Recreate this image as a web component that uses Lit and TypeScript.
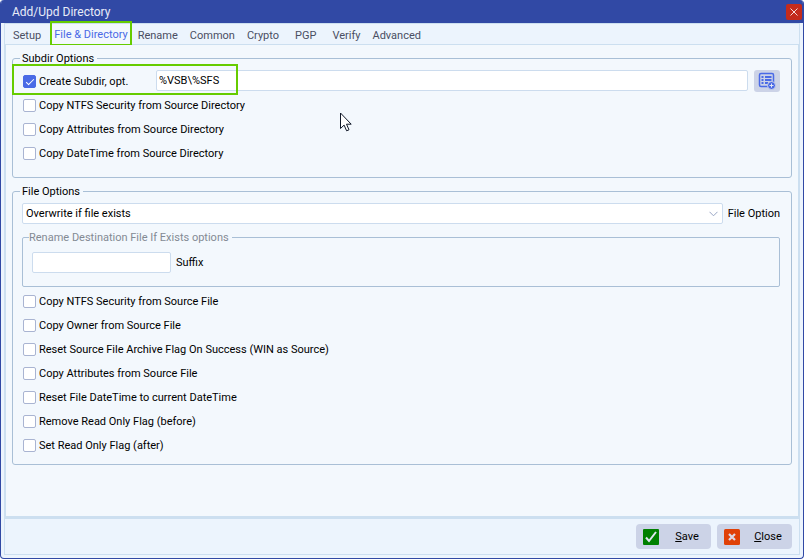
import { LitElement, html, css } from "lit";
import { customElement, property, state } from "lit/decorators.js";

const TABS = ["Setup", "File & Directory", "Rename", "Common", "Crypto", "PGP", "Verify", "Advanced"];

@customElement("check-row")
class CheckRow extends LitElement {
  @property() label = "";
  @property({ type: Boolean }) checked = false;

  static styles = css`
    :host {
      display: flex;
      align-items: center;
      height: 23px;
      flex: none;
    }
    label {
      display: flex;
      align-items: center;
      gap: 3px;
      padding-left: 1px;
      white-space: nowrap;
    }
    input {
      appearance: none;
      box-sizing: border-box;
      width: 13px;
      height: 13px;
      margin: 0;
      border: 1px solid #a9b4d2;
      border-radius: 2px;
      background: #fff;
      display: grid;
      place-items: center;
    }
    input:checked {
      border-color: #4a6ae6;
      background: #4a6ae6;
    }
    input:checked::after {
      content: "";
      width: 7px;
      height: 3px;
      border: solid #fff;
      border-width: 0 0 1px 1px;
      transform: translateY(-1px) rotate(-45deg);
    }
  `;

  render() {
    return html`<label><input type="checkbox" ?checked=${this.checked} />${this.label}</label>`;
  }
}

@customElement("app-root")
class AppRoot extends LitElement {
  @state() active = 1;

  static styles = css`
    :host {
      display: block;
      font: 11px/15px Roboto, "Noto Sans", sans-serif;
      color: #000;
    }
    * {
      box-sizing: border-box;
    }
    button,
    input,
    select {
      font: inherit;
      color: inherit;
      margin: 0;
    }
    .window {
      display: flex;
      flex-direction: column;
      min-height: 100vh;
      border: 1px solid #3149a5;
      border-top: 0;
      border-radius: 4px;
      background: #ecf4fd;
      overflow: hidden;
    }
    .title {
      display: flex;
      align-items: center;
      justify-content: space-between;
      height: 23px;
      padding: 0 1px 0 11px;
      background: #3149a5;
      color: #e8ecf8;
    }
    h1 {
      margin: 0;
      padding-top: 1px;
      font-size: 12px;
      font-weight: 400;
    }
    .x {
      width: 16px;
      height: 16px;
      padding: 0;
      border: 0;
      border-radius: 2px;
      background: #c42b1c;
      display: grid;
      place-items: center;
    }
    .body {
      flex: 1;
      display: flex;
      flex-direction: column;
      margin: 0 3px 3px;
      border: 1px solid #ccdff0;
    }
    .tabs {
      display: flex;
      height: 21px;
      padding-left: 2px;
      border-bottom: 1px solid #ccdff0;
    }
    .tab {
      position: relative;
      height: 21px;
      padding: 1px 6px 0;
      border: 0;
      background: none;
      color: #4a4e62;
      white-space: nowrap;
    }
    .tab.short {
      padding: 1px 10px 0;
    }
    .tab.active {
      margin-left: 3px;
      background: #f3f8fd;
      border: solid #ccdff0;
      border-width: 0 1px;
      padding: 0 3px 1px;
      color: #4a6ae6;
    }
    .mark {
      position: absolute;
      border: 2px solid #66cc00;
      pointer-events: none;
    }
    .tab .mark {
      inset: -3px -1px -1px;
    }
    .page {
      position: relative;
      flex: 1;
      display: flex;
      flex-direction: column;
      gap: 6px;
      padding: 6px;
      border: solid #ccdff0;
      border-width: 0 1px;
      background: #f3f8fd;
    }
    .pointer {
      position: absolute;
      left: 333px;
      top: 67px;
      pointer-events: none;
    }
    fieldset {
      min-width: 0;
      margin: 0;
      padding: 4px 11px 12px 9px;
      border: 1px solid #a9bfd6;
      border-radius: 3px;
    }
    legend {
      height: 15px;
      margin-left: -2px;
      padding: 0 3px 0 2px;
    }
    .rows {
      display: flex;
      flex-direction: column;
      gap: 1px;
    }
    .line {
      position: relative;
      display: flex;
      align-items: flex-start;
    }
    .line check-row {
      width: 134px;
    }
    .line .mark {
      left: -10px;
      top: -6px;
      width: 226px;
      height: 31px;
    }
    input,
    select {
      height: 21px;
      border: 1px solid #ccdcee;
      border-radius: 2px;
      background: #fff;
      padding: 0 3px;
    }
    .subdir {
      flex: 1;
      min-width: 0;
      margin-right: 6px;
      padding: 0 2px;
    }
    .pick {
      width: 26px;
      height: 22px;
      padding: 0;
      border: 0;
      border-radius: 3px;
      background: #ccd3e7;
      display: grid;
      place-items: center;
    }
    .files {
      padding-bottom: 7px;
    }
    .choice {
      display: flex;
      align-items: center;
      gap: 5px;
    }
    .combo {
      flex: 1;
      display: grid;
      align-items: center;
    }
    .combo > * {
      grid-area: 1 / 1;
    }
    select {
      appearance: none;
      width: 100%;
    }
    .combo svg {
      justify-self: end;
      margin-right: 5px;
      pointer-events: none;
    }
    .rename {
      margin: 6px 0 3px;
      padding: 7px 9px 13px;
      border-radius: 2px;
    }
    .rename legend {
      color: #838a94;
      margin-left: -3px;
      padding-left: 0;
    }
    .suffix {
      display: flex;
      align-items: center;
      gap: 5px;
    }
    .suffix input {
      width: 139px;
    }
    .foot {
      display: flex;
      justify-content: flex-end;
      gap: 6px;
      padding: 5px 7px 5px;
      border-top: 3px solid #ccdff0;
    }
    .act {
      display: grid;
      grid-template-columns: 16px 1fr;
      gap: 11px;
      align-items: center;
      width: 75px;
      height: 25px;
      padding: 0 7px;
      border: 0;
      border-radius: 4px;
      background: #ccd3e7;
    }
    svg {
      display: block;
    }
  `;

  render() {
    return html`
      <main class="window">
        <header class="title">
          <h1>Add/Upd Directory</h1>
          <button class="x" aria-label="Close window">
            <svg width="8" height="8" viewBox="0 0 8 8"><path d="M.5.5l7 7M7.5.5l-7 7" stroke="#f3dcda" fill="none" /></svg>
          </button>
        </header>
        <div class="body">
          <nav class="tabs" role="tablist">
            ${TABS.map(
              (t, i) => html`<button
                class="tab ${t === "PGP" ? "short" : ""} ${i === this.active ? "active" : ""}"
                role="tab"
                aria-selected=${i === this.active}
                @click=${() => (this.active = i)}
              >${t}${i === 1 ? html`<span class="mark"></span>` : ""}</button>`
            )}
          </nav>
          <section class="page">
            <fieldset>
              <legend>Subdir Options</legend>
              <div class="rows">
                <div class="line">
                  <check-row label="Create Subdir, opt." checked></check-row>
                  <input class="subdir" aria-label="Subdirectory" value="%VSB\\%SFS" />
                  <button class="pick" aria-label="Insert variable">
                    <svg width="18" height="18" viewBox="0 0 18 18" fill="none" stroke="#4a6ae6">
                      <rect x="1.5" y="1.5" width="14" height="13" rx="1.5" stroke-width="1.5" />
                      <path d="M3.5 5h2M7 5h6.5M3.5 8h2M7 8h6.5M3.5 11h2M7 11h3" stroke-width="2" />
                      <circle cx="13.5" cy="13.5" r="4" fill="#4a6ae6" stroke="#ccd3e7" />
                      <path d="M11.5 13.5h4M13.5 11.5v4" stroke="#e4e8f4" />
                    </svg>
                  </button>
                  <span class="mark"></span>
                </div>
                <check-row label="Copy NTFS Security from Source Directory"></check-row>
                <check-row label="Copy Attributes from Source Directory"></check-row>
                <check-row label="Copy DateTime from Source Directory"></check-row>
              </div>
            </fieldset>
            <fieldset class="files">
              <legend>File Options</legend>
              <div class="choice">
                <div class="combo">
                  <select id="mode"><option>Overwrite if file exists</option></select>
                  <svg width="9" height="6" viewBox="0 0 9 6"><path d="M.5.8l4 4 4-4" stroke="#98a5c4" fill="none" /></svg>
                </div>
                <label for="mode">File Option</label>
              </div>
              <fieldset class="rename">
                <legend>Rename Destination File If Exists options</legend>
                <div class="suffix">
                  <input id="suffix" />
                  <label for="suffix">Suffix</label>
                </div>
              </fieldset>
              <div class="rows">
                <check-row label="Copy NTFS Security from Source File"></check-row>
                <check-row label="Copy Owner from Source File"></check-row>
                <check-row label="Reset Source File Archive Flag On Success (WIN as Source)"></check-row>
                <check-row label="Copy Attributes from Source File"></check-row>
                <check-row label="Reset File DateTime to current DateTime"></check-row>
                <check-row label="Remove Read Only Flag (before)"></check-row>
                <check-row label="Set Read Only Flag (after)"></check-row>
              </div>
            </fieldset>
            <svg class="pointer" width="14" height="20" viewBox="0 0 14 20">
              <path d="M1.5 1v15.5l3.6-3.4 2.5 5.7 2.4-1-2.5-5.6h4.7z" fill="#fff" stroke="#101828" />
            </svg>
          </section>
          <footer class="foot">
            <button class="act">
              <svg width="16" height="16" viewBox="0 0 16 16">
                <rect width="16" height="16" rx="1" fill="#008000" />
                <path d="M3 8.5l3 3.5 7-9" stroke="#dfe6f0" stroke-width="2" fill="none" />
              </svg>
              <span><u>S</u>ave</span>
            </button>
            <button class="act">
              <svg width="16" height="16" viewBox="0 0 16 16">
                <rect width="16" height="16" rx="1.5" fill="#e04006" />
                <path d="M5 5l6 6M11 5l-6 6" stroke="#dcd9e6" stroke-width="2.2" fill="none" />
              </svg>
              <span><u>C</u>lose</span>
            </button>
          </footer>
        </div>
      </main>
    `;
  }
}
